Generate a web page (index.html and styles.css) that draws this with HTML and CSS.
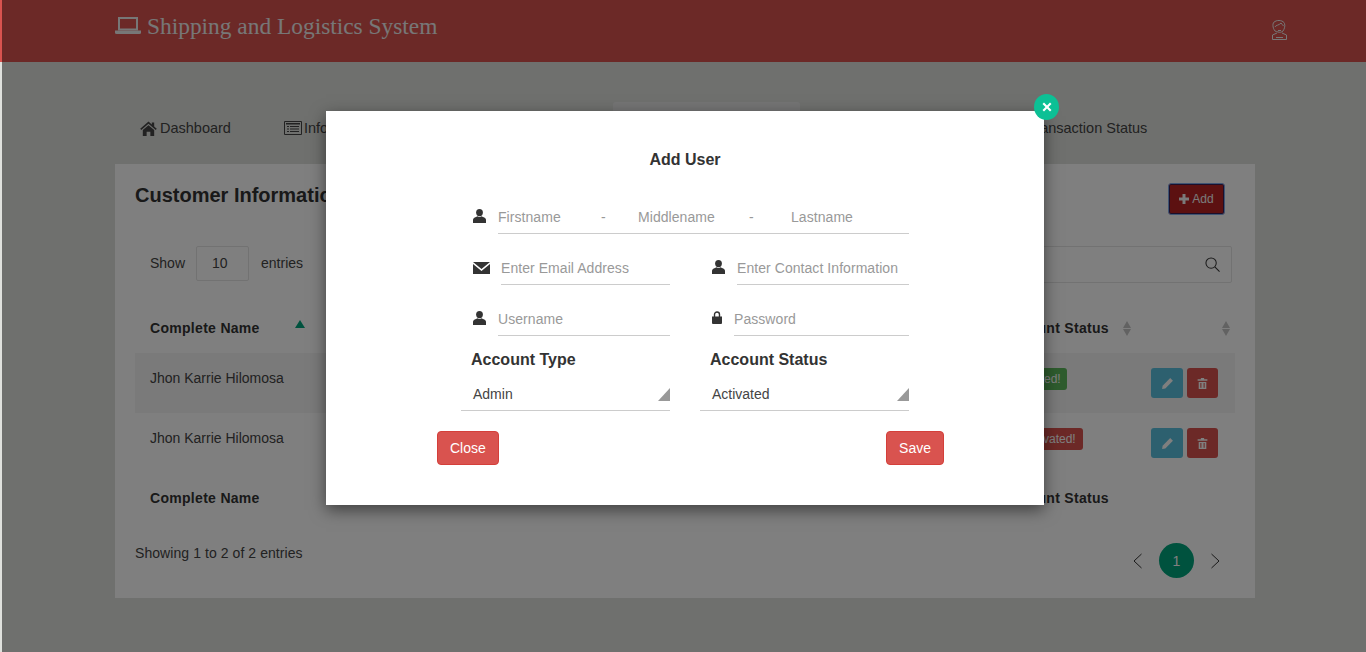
FILE: index.html
```html
<!DOCTYPE html>
<html lang="en">
<head>
<meta charset="utf-8">
<title>Shipping and Logistics System</title>
<link rel="stylesheet" href="styles.css">
</head>
<body>
<div class="page">
  <header class="topbar">
    <div class="brand">
      <svg class="brand-icon" viewBox="0 0 26 17"><path d="M4 1h18v11.500H4z" fill="none" stroke="currentColor" stroke-width="2"/><path d="M0 13.500h26V15.500a1.500 1.500 0 0 1-1.500 1.500H1.500A1.500 1.500 0 0 1 0 15.500z" fill="currentColor"/></svg>
      <span>Shipping and Logistics System</span>
    </div>
    <svg class="avatar" viewBox="0 0 15 20" fill="none" stroke="currentColor"><path d="M3 11C.5 8 0 2.500 3 1.500 6-.5 11.500.5 12.500 3.500c1 3-.5 6-1.500 7.500-1.500 1.500-3.500 1.500-5 1-1-.3-2-.5-3-1zM3 7c.5-2 4-1.500 6-4 .5 1 2 2 2.500 3M6 10.500h3M5 13l-4.500 2v4.500h14V15L10 13M4 17.500h7"/></svg>
  </header>
  <nav class="tabs">
    <span class="tab-active"></span>
    <a class="tab tab-dash"><svg class="ic" viewBox="0 0 16 14.500"><path d="M8 .5 0 7.500l1 1.200 7-6 7 6 1-1.200-2.500-2.200V1.500h-2.300v1.800z" fill="currentColor"/><path d="M2.500 8.800 8 4.200l5.500 4.600v5.700H9.800v-4.200H6.200v4.200H2.500z" fill="currentColor"/></svg>Dashboard</a>
    <a class="tab tab-info"><svg class="ic ic-list" viewBox="0 0 18 14"><path d="M.5.500h17v13H.5z" fill="none" stroke="currentColor"/><path d="M2 2h14v1.500H2zM3 5h2v1H3zm3 0h9v1H6zM3 7.500h2v1H3zm3 0h9v1H6zM3 10h2v1H3zm3 0h9v1H6z" fill="currentColor"/></svg>Information</a>
    <a class="tab tab-status">Transaction Status</a>
  </nav>
  <section class="card">
    <div class="card-head">
      <h2>Customer Information</h2>
      <button class="add"><svg viewBox="0 0 10 10"><path d="M3.500 0h3v3.500H10v3H6.500V10h-3V6.500H0v-3h3.500z" fill="currentColor"/></svg>Add</button>
    </div>
    <div class="controls">
      <div class="len">Show<span class="len-box">10</span>entries</div>
      <div class="search"><svg viewBox="0 0 16 16" fill="none" stroke="currentColor" stroke-width="1.100"><circle cx="6.500" cy="6.500" r="5.500"/><path d="m10.500 10.500 5 5"/></svg></div>
    </div>
    <table class="grid">
      <thead><tr><th class="c1">Complete Name<i class="sort-up"></i></th><th class="c2"></th><th class="c3">Account Status<i class="sort sort-3"></i></th><th class="c4"><i class="sort"></i></th></tr></thead>
      <tbody>
        <tr class="odd"><td>Jhon Karrie Hilomosa</td><td></td><td><span class="pill green">Activated!</span></td><td><span class="act"><span class="b blue"><svg viewBox="0 0 12 12"><path d="m8.500 1 2.500 2.500L4 10.500 1 11l.5-3z" fill="currentColor"/></svg></span><span class="b red"><svg viewBox="0 0 12 12"><path d="M1.500 2h3V1h3v1h3v1.500h-9zM2.500 4.500h7V11h-7zM4 5.500V10h1V5.500zm3 0V10h1V5.500z" fill="currentColor" fill-rule="evenodd"/></svg></span></span></td></tr>
        <tr><td>Jhon Karrie Hilomosa</td><td></td><td><span class="pill red">Deactivated!</span></td><td><span class="act"><span class="b blue"><svg viewBox="0 0 12 12"><path d="m8.500 1 2.500 2.500L4 10.500 1 11l.5-3z" fill="currentColor"/></svg></span><span class="b red"><svg viewBox="0 0 12 12"><path d="M1.500 2h3V1h3v1h3v1.500h-9zM2.500 4.500h7V11h-7zM4 5.500V10h1V5.500zm3 0V10h1V5.500z" fill="currentColor" fill-rule="evenodd"/></svg></span></span></td></tr>
      </tbody>
      <tfoot><tr><th>Complete Name</th><th></th><th>Account Status</th><th></th></tr></tfoot>
    </table>
    <div class="card-foot">
      <span class="info">Showing 1 to 2 of 2 entries</span>
      <div class="pager">
        <svg viewBox="0 0 9 16" fill="none" stroke="currentColor"><path d="M8.500 1 1 8l7.500 7"/></svg>
        <span class="page-num">1</span>
        <svg viewBox="0 0 9 16" fill="none" stroke="currentColor"><path d="M.5 1 8 8l-7.500 7"/></svg>
      </div>
    </div>
  </section>
</div>
<div class="overlay"></div>
<div class="modal">
  <span class="x"><svg viewBox="0 0 10 10"><path d="M2 .5 5 3.500 8 .5 9.500 2l-3 3 3 3L8 9.500l-3-3-3 3L.5 8l3-3-3-3z" fill="currentColor"/></svg></span>
  <h3>Add User</h3>
  <form class="form">
    <div class="row row-1">
      <svg class="fi" viewBox="0 0 13 14"><ellipse cx="6.500" cy="3.600" rx="3.400" ry="3.600" fill="currentColor"/><path d="M0 14v-3c0-1.500 1-2.500 3-3l1.500-.7c1 .9 3 .9 4 0L10 8c2 .5 3 1.500 3 3v3z" fill="currentColor"/></svg>
      <div class="line names"><span class="n1">Firstname</span><span class="d1">-</span><span class="n2">Middlename</span><span class="d2">-</span><span class="n3">Lastname</span></div>
    </div>
    <div class="row row-2">
      <div class="cell"><svg class="fi fi-mail" viewBox="0 0 17 12"><path d="M0 0h17L8.500 7zM0 2l8.500 7L17 2v10H0z" fill="currentColor"/></svg><div class="line e">Enter Email Address</div></div>
      <div class="cell"><svg class="fi fi-p2" viewBox="0 0 13 14"><ellipse cx="6.500" cy="3.600" rx="3.400" ry="3.600" fill="currentColor"/><path d="M0 14v-3c0-1.500 1-2.500 3-3l1.500-.7c1 .9 3 .9 4 0L10 8c2 .5 3 1.500 3 3v3z" fill="currentColor"/></svg><div class="line c">Enter Contact Information</div></div>
    </div>
    <div class="row row-3">
      <div class="cell"><svg class="fi" viewBox="0 0 13 14"><ellipse cx="6.500" cy="3.600" rx="3.400" ry="3.600" fill="currentColor"/><path d="M0 14v-3c0-1.500 1-2.500 3-3l1.500-.7c1 .9 3 .9 4 0L10 8c2 .5 3 1.500 3 3v3z" fill="currentColor"/></svg><div class="line u">Username</div></div>
      <div class="cell"><svg class="fi fi-lock" viewBox="0 0 10 13"><path d="M2.500 6V3.500a2.500 2.500 0 0 1 5 0V6" fill="none" stroke="currentColor" stroke-width="1.400"/><path d="M0 5.500h10V12a1 1 0 0 1-1 1H1a1 1 0 0 1-1-1z" fill="currentColor"/></svg><div class="line p">Password</div></div>
    </div>
    <div class="row row-labels"><label>Account Type</label><label>Account Status</label></div>
    <div class="row row-sel">
      <div class="sel">Admin<i></i></div>
      <div class="sel">Activated<i></i></div>
    </div>
    <div class="row row-btn"><button type="button" class="danger">Close</button><button type="button" class="danger">Save</button></div>
  </form>
</div>
</body>
</html>
```
FILE: styles.css
```css
*{box-sizing:border-box}
html,body{margin:0;padding:0;height:100%;overflow:hidden}
body{background:#dfe1dd;font-family:"Liberation Sans",Arial,sans-serif;font-size:14px;color:#444;position:relative}
.page{height:652px}
.topbar{height:62px;background:#d9534f;padding:0 79px 0 115px;display:flex;justify-content:space-between;align-items:flex-start;color:#fff}
.brand{display:flex;align-items:flex-start;font-family:"Liberation Serif",serif;font-size:23.400px;line-height:26px;padding-top:13px;color:#eee}
.brand-icon{width:26px;height:17px;margin:4px 6px 0 0;display:block}
.avatar{width:15px;height:20px;margin-top:20px;display:block;color:#eee}
.tabs{position:relative;height:102px}
.tab-active{position:absolute;left:613px;top:40px;width:187px;height:20px;background:#ebebeb;border-radius:3px 3px 0 0}
.tab{position:absolute;top:57px;font-size:14.500px;line-height:18px;color:#444;display:flex;align-items:center;white-space:nowrap}
.tab-dash{left:140px}
.tab-info{left:284px}
.tab-status{left:1027px}
.ic{width:17px;height:15px;margin-right:3px}
.ic-list{width:18px;height:14px;margin-right:2px}
.card{margin:0 111px 0 115px;height:434px;background:#fff;position:relative;padding:0 20px}
.card-head{display:flex;justify-content:space-between;align-items:flex-start;padding-top:19px;height:82px}
.card-head h2{margin:0;font-size:20px;line-height:24px;color:#333;font-weight:bold}
.add{width:57px;height:32px;margin:0 10px 0 0;background:#b82222;border:1px solid #7ea8e8;box-shadow:inset 0 0 0 1px #3b1f55;border-radius:3px;color:#f4f4f4;font:12px "Liberation Sans",sans-serif;padding:0;display:flex;align-items:center;justify-content:center;gap:3px}
.add svg{width:10px;height:10px}
.controls{display:flex;justify-content:space-between;height:36px;align-items:flex-start;padding-left:15px;margin-right:3px}
.len{display:flex;align-items:center;font-size:14px;color:#444;height:35px;padding-bottom:1px}
.len-box{width:53px;height:35px;border:1px solid #e4e4e4;border-radius:2px;margin:1px 12px 0 11px;padding-left:15px;line-height:33px}
.search{width:300px;height:37px;border:1px solid #e4e4e4;border-radius:2px;display:flex;align-items:center;justify-content:flex-end;padding-right:11px;color:#333}
.search svg{width:15px;height:15px}
.grid{width:1100px;border-collapse:collapse;margin-top:21px;table-layout:fixed}
.grid th{height:50px;text-align:left;font-size:14px;letter-spacing:.3px;color:#333;padding:0 15px;position:relative;font-weight:bold}
.grid td{height:60px;padding:0 15px 10px;font-size:14px;color:#444;position:relative}
.grid tfoot th{height:50px}
.odd td{background:#f4f4f4}
.c1{width:180px}
.c3{width:148px}
.c4{width:100px}
.sort-up{position:absolute;right:10px;top:17px;width:0;height:0;border-left:5px solid transparent;border-right:5px solid transparent;border-bottom:8px solid #00a57d}
.sort{position:absolute;right:5px;top:18px;width:0;height:0;border-left:4.500px solid transparent;border-right:4.500px solid transparent;border-bottom:7px solid #c4c4c4}
.sort-3{right:4px}
.sort::after{content:"";position:absolute;left:-4.500px;top:8px;width:0;height:0;border-left:4.500px solid transparent;border-right:4.500px solid transparent;border-top:7px solid #c4c4c4}
.pill{display:inline-block;height:22px;line-height:22px;padding:0 6px;border-radius:3px;color:#fff;font-size:12px;margin-top:2px}
.pill.green{background:#5cb85c}
.pill.red{background:#d9534f;padding:0 7px}
.act{display:flex;gap:4px;justify-content:flex-end;margin:10px 2px 0 0}
.b{height:30px;border-radius:3px;display:flex;align-items:center;justify-content:center;color:#fff}
.b svg{width:13px;height:13px}
.b.blue{width:32px;background:#5bc0de}
.b.red{width:31px;background:#d9534f}
.card-foot{display:flex;justify-content:space-between;align-items:flex-start;color:#444;height:60px;font-size:14px}
.info{margin-top:22px;letter-spacing:.07px}
.pager{display:flex;align-items:center;gap:16px;margin:20px 15px 0 0;color:#333}
.pager svg{width:9px;height:16px}
.page-num{width:35px;height:35px;border-radius:50%;background:#00a57d;color:#fff;font-size:14px;display:flex;align-items:center;justify-content:center;margin:0 1px}
.overlay{position:absolute;left:2px;top:0;right:0;bottom:0;background:rgba(0,0,0,.5)}
.modal{position:absolute;left:326px;top:111px;width:718px;height:394px;background:#fff;box-shadow:0 5px 15px rgba(0,0,0,.5);font-size:14px}
.modal h3{margin:0;text-align:center;font-size:16px;line-height:18px;padding:40px 0 0 0;color:#333;font-weight:bold;width:718px}
.x{position:absolute;left:708px;top:-17px;width:25px;height:26px;border-radius:50%;background:#0cc095;color:#fff;display:flex;align-items:center;justify-content:center}
.x svg{width:10px;height:10px}
.form{margin-top:0;padding:0}
.row{display:flex}
.fi{width:13px;height:14px;color:#333;flex:none;display:block}
.line{height:34px;border-bottom:1px solid #ccc;color:#999;line-height:34px;font-size:14px;letter-spacing:.06px;white-space:nowrap}
.row-1{margin:31px 0 0 147px;align-items:flex-start}
.row-1 .fi{margin-top:9px;margin-right:12px}
.names{width:411px;position:relative}
.names span{position:absolute;top:0}
.n1{left:0}.d1{left:103px}.n2{left:140px}.d2{left:251px}.n3{left:293px}
.row-2{margin:17px 0 0 147px}
.row-3{margin:17px 0 0 147px}
.cell{display:flex;align-items:flex-start}
.row-2 .cell:first-child{width:197px}
.row-2 .cell:last-child{margin-left:42px}
.row-3 .cell:first-child{width:197px}
.row-3 .cell:last-child{margin-left:42px}
.cell .fi{margin-top:9px}
.cell .fi-mail{width:17px;height:12px;margin:11px 11px 0 0}
.fi-p2{margin-right:12px}
.e{width:169px}
.c{width:172px}
.row-3 .fi{margin-right:12px}
.row-3 .fi-lock{width:10px;height:13px;margin-right:12px}
.u{width:172px}
.p{width:175px}
.row-labels{margin:14px 0 0 145px}
.row-labels label{font-size:16px;line-height:20px;font-weight:bold;color:#333;width:239px}
.row-sel{margin:6px 0 0 135px;gap:30px}
.sel{width:209px;height:35px;border-bottom:1px solid #ccc;padding-left:12px;line-height:37px;color:#444;font-size:14px;position:relative}
.sel i{position:absolute;right:0;bottom:9px;width:0;height:0;border-style:solid;border-width:0 0 13px 12px;border-color:transparent transparent #999 transparent}
.row-btn{margin:20px 0 0 111px;width:507px;justify-content:space-between}
.danger{height:34px;padding:0 12px;background:#d9534f;border:1px solid #d43f3a;border-radius:4px;color:#fff;font:14px "Liberation Sans",sans-serif}
```
